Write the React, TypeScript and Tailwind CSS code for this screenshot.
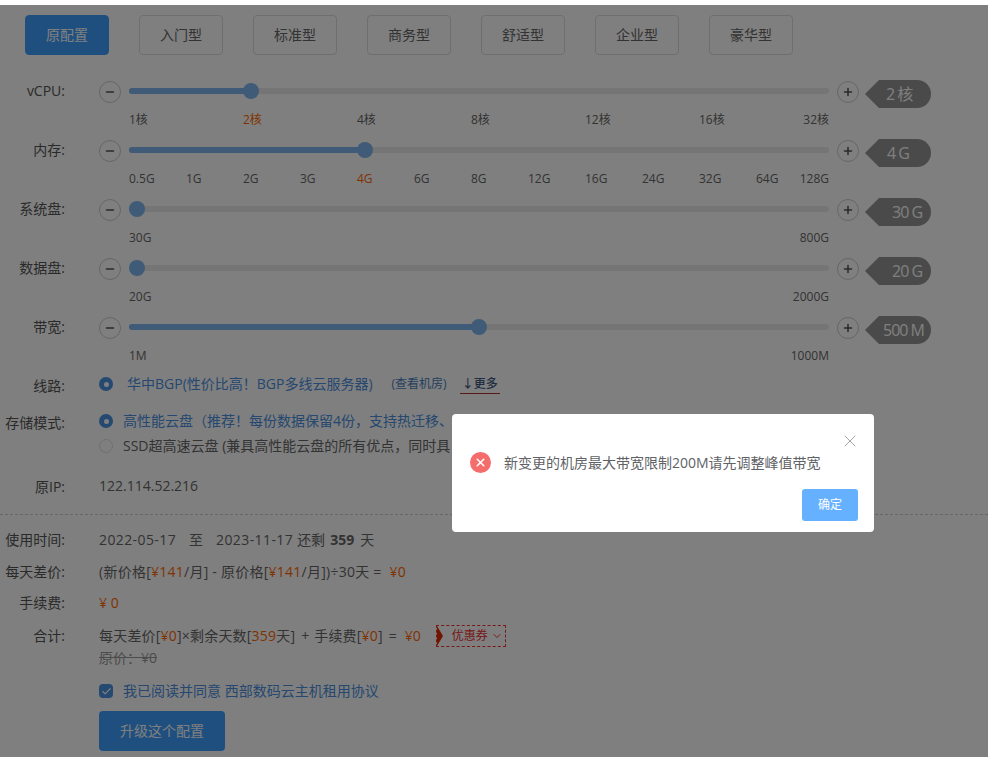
import React from 'react';
import { Check, ChevronDown, Minus, Plus, X } from 'lucide-react';

const plans = ['原配置', '入门型', '标准型', '商务型', '舒适型', '企业型', '豪华型'];

type Tick = { text: string; on?: string };

const Ticks = ({ items, cell }: { items: Tick[]; cell: string }) => (
  <div className="flex mt-[9px] ml-[129px] w-[700px] text-xs leading-[16px] text-[#666]">
    {items.map((t, i) =>
      i === items.length - 1 ? (
        <span key={t.text} className="w-4 shrink-0 ml-auto flex justify-end whitespace-nowrap">{t.text}</span>
      ) : (
        <span key={t.text} className={`${cell} shrink-0 ${t.on ?? ''}`}>{t.text}</span>
      ),
    )}
  </div>
);

const SliderRow = ({
  label, fill, value, tagPad, children,
}: { label: string; fill: string; value: string; tagPad: string; children: React.ReactNode }) => (
  <div className="h-[59px]">
    <div className="flex items-center h-[22px]">
      <div className="w-[65px] -mt-[2px] text-right text-sm text-[#555] shrink-0">{label}</div>
      <button className="ml-[34px] w-[22px] h-[22px] rounded-full border border-[#ccc] flex items-center justify-center text-[#555]">
        <Minus size={12} strokeWidth={3} />
      </button>
      <div className="relative ml-2 w-[700px] h-[6px] -mt-[2px] rounded-full bg-[#eaeaea]">
        <div className={`h-[6px] rounded-full bg-[#7fb6ee] ${fill}`} />
        <div className={`absolute top-[-5px] w-4 h-4 rounded-full bg-[#7fb6ee] ${fill === 'w-0' ? 'left-0' : fill === 'w-[122px]' ? 'left-[114px]' : fill === 'w-[236px]' ? 'left-[228px]' : 'left-[342px]'}`} />
      </div>
      <button className="ml-2 w-[22px] h-[22px] rounded-full border border-[#ccc] flex items-center justify-center text-[#555]">
        <Plus size={12} strokeWidth={3} />
      </button>
      <div className="flex shrink-0 ml-[6px] mt-[4px] h-[28px] w-[66px] text-white">
        <div className="w-0 h-0 border-y-[14px] border-y-transparent border-r-[14px] border-r-[#949494]" />
        <div className={`flex-1 h-[28px] bg-[#949494] rounded-r-[14px] text-base leading-[28px] tracking-[-1px] whitespace-nowrap ${tagPad}`}>{value}</div>
      </div>
    </div>
    {children}
  </div>
);

const Row = ({ label, labelClass, className, children }: { label?: string; labelClass?: string; className?: string; children: React.ReactNode }) => (
  <div className={`flex items-center h-5 text-sm ${className ?? ''}`}>
    <div className={`w-[65px] text-right text-sm text-[#555] shrink-0 ${labelClass ?? ''}`}>{label}</div>
    <div className="ml-[34px] flex items-center whitespace-nowrap text-[#666]">{children}</div>
  </div>
);

const Radio = ({ on }: { on?: boolean }) =>
  on ? (
    <span className="w-[14px] h-[14px] rounded-full bg-[#4a93e0] flex items-center justify-center shrink-0">
      <span className="w-[5px] h-[5px] rounded-full bg-white" />
    </span>
  ) : (
    <span className="w-[14px] h-[14px] rounded-full border border-[#ddd] shrink-0" />
  );

const O = ({ children }: { children: React.ReactNode }) => <span className="text-[#f60]">{children}</span>;

export default function App() {
  return (
    <div className="relative h-[757px] overflow-hidden bg-white font-['Open_Sans','Noto_Sans_CJK_SC',sans-serif]">
      <div className="pt-[15px]">
        <div className="flex gap-[30px] pl-[25px]">
          {plans.map((p, i) => (
            <button
              key={p}
              className={`w-[84px] h-10 rounded text-sm border ${i === 0 ? 'bg-[#3f9fff] border-[#3f9fff] text-white' : 'bg-white border-[#ddd] text-[#666]'}`}
            >
              {p}
            </button>
          ))}
        </div>

        <div className="mt-[26px]">
          <SliderRow label="vCPU:" fill="w-[122px]" value="2 核" tagPad="pl-[7px]">
            <Ticks
              cell="w-[114px]"
              items={[{ text: '1核' }, { text: '2核', on: 'text-[#f60]' }, { text: '4核' }, { text: '8核' }, { text: '12核' }, { text: '16核' }, { text: '32核' }]}
            />
          </SliderRow>
          <SliderRow label="内存:" fill="w-[236px]" value="4 G" tagPad="pl-2">
            <Ticks
              cell="w-[57px]"
              items={[{ text: '0.5G' }, { text: '1G' }, { text: '2G' }, { text: '3G' }, { text: '4G', on: 'text-[#f60]' }, { text: '6G' }, { text: '8G' }, { text: '12G' }, { text: '16G' }, { text: '24G' }, { text: '32G' }, { text: '64G' }, { text: '128G' }]}
            />
          </SliderRow>
          <SliderRow label="系统盘:" fill="w-0" value="30 G" tagPad="pl-[13px]">
            <Ticks cell="w-[57px]" items={[{ text: '30G' }, { text: '800G' }]} />
          </SliderRow>
          <SliderRow label="数据盘:" fill="w-0" value="20 G" tagPad="pl-[13px]">
            <Ticks cell="w-[57px]" items={[{ text: '20G' }, { text: '2000G' }]} />
          </SliderRow>
          <SliderRow label="带宽:" fill="w-[350px]" value="500 M" tagPad="pl-[4px]">
            <Ticks cell="w-[57px]" items={[{ text: '1M' }, { text: '1000M' }]} />
          </SliderRow>
        </div>

        <Row label="线路:" labelClass="mt-[4px]" className="-mt-[2px]">
          <Radio on />
          <span className="ml-[14px] text-sm text-[#4a8fe0]">华中BGP(性价比高！BGP多线云服务器)</span>
          <span className="ml-[19px] text-xs text-[#4a7fc0]">(查看机房)</span>
          <span className="ml-[13px] w-10 text-center text-xs font-medium leading-[19px] border-b border-[#a33] text-[#3c5a80]">↓更多</span>
        </Row>
        <Row label="存储模式:" labelClass="mt-[4px]" className="mt-[17px]">
          <Radio on />
          <span className="ml-[10px] text-[#4a8fe0]">高性能云盘（推荐！每份数据保留4份，支持热迁移、</span>
        </Row>
        <Row className="mt-[5px]">
          <Radio />
          <span className="ml-[10px]">SSD超高速云盘 (兼具高性能云盘的所有优点，同时具</span>
        </Row>
        <Row label="原IP:" labelClass="mt-[2px]" className="mt-5">122.114.52.216</Row>

        <div className="mt-[18px] border-t border-dashed border-[#ccc]" />

        <Row label="使用时间:" className="mt-[15px]">
          <span className="tracking-[0.4px]">2022-05-17</span>
          <span className="ml-[13px] mr-[13px]">至</span>
          <span className="tracking-[0.4px]">2023-11-17</span>
          <span className="ml-[4px]">还剩</span>
          <b className="ml-[5px]">359</b>
          <span className="ml-[6px]">天</span>
        </Row>
        <Row label="每天差价:" className="mt-3">
          <span className="tracking-[0.25px]">
            (新价格[<O>¥141</O>/月] - 原价格[<O>¥141</O>/月])÷30天 =&nbsp;&nbsp;<O>¥0</O>
          </span>
        </Row>
        <Row label="手续费:" className="mt-[11px]"><O>¥ 0</O></Row>
        <Row label="合计:" className="mt-[13px]">
          <span className="tracking-[0.2px]">每天差价[<O>¥0</O>]×剩余天数[<O>359</O>天]</span>
          <span className="ml-[6px] mr-[5px]">+</span>
          <span className="tracking-[0.2px]">手续费[<O>¥0</O>]</span>
          <span className="ml-[6px] mr-[8px]">=</span>
          <O>¥0</O>
          <span className="relative ml-[15px] w-[70px] h-[22px] border border-dashed border-[#e33] flex items-center text-xs text-[#e33]">
            <span className="w-0 h-0 border-y-[10px] border-y-transparent border-l-[6px] border-l-[#e02a00]" />
            <span className="ml-[9px]">优惠券</span>
            <ChevronDown size={12} className="ml-[3px]" />
          </span>
        </Row>
        <Row className="mt-[2px]"><span className="line-through text-[#999]">原价：¥0</span></Row>
        <Row className="mt-[13px]">
          <span className="w-[14px] h-[14px] rounded-sm bg-[#4a93e0] flex items-center justify-center text-white shrink-0">
            <Check size={11} strokeWidth={2.5} />
          </span>
          <span className="ml-[10px] text-[#4a8fe0]">我已阅读并同意 西部数码云主机租用协议</span>
        </Row>
        <button className="mt-[10px] ml-[99px] w-[126px] h-10 rounded bg-[#3f9fff] text-white text-sm">升级这个配置</button>
      </div>

      <div className="absolute inset-x-0 top-[5px] bottom-0 bg-black/50" />

      <div className="absolute left-[452px] top-[414px] w-[422px] h-[118px] rounded bg-white">
        <X size={20} strokeWidth={1} className="absolute right-[14px] top-[17px] text-[#909399]" />
        <div className="flex items-center pl-[18px] pt-[38px]">
          <span className="w-[21px] h-[21px] rounded-full bg-[#f56c6c] flex items-center justify-center text-white shrink-0">
            <X size={13} strokeWidth={3} />
          </span>
          <span className="ml-[13px] text-sm leading-5 text-[#606266] whitespace-nowrap">新变更的机房最大带宽限制200M请先调整峰值带宽</span>
        </div>
        <button className="absolute right-[16px] bottom-[11px] w-14 h-8 rounded-[3px] bg-[#66b1ff] text-white text-xs">确定</button>
      </div>
    </div>
  );
}
